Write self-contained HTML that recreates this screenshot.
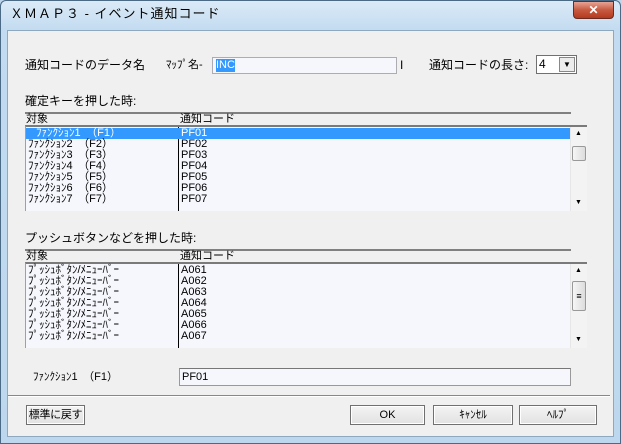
<!DOCTYPE html>
<html><head><meta charset="utf-8"><style>
*{margin:0;padding:0;box-sizing:border-box}
body{width:621px;height:444px;overflow:hidden;background:#bcd6ec;font-family:"Liberation Sans","Noto Sans CJK JP",sans-serif;font-size:12px;color:#000;position:relative}
.a{position:absolute}
.win{left:0;top:0;width:621px;height:444px;border:1px solid #4b6a86;border-radius:6px 6px 0 0;background:linear-gradient(#dbeaf7,#c2dbf0 30px,#bdd7ee)}
.client{left:7px;top:30px;width:607px;height:407px;background:#f0f0f0;border:1px solid #8ea8c0}
.t{white-space:nowrap;line-height:13px}
.hdr{background:#f0f0f0;border-top:2px solid #808080;height:13px;line-height:11px}
.list{background:#f6f7fd;border-top:2px solid #7a7a7a;border-left:1px solid #a0a0a0}
.row{position:absolute;left:0;height:11px;line-height:11px;font-size:11px;width:545px;white-space:nowrap}
.sb{background:#f3f3f3;border-left:1px solid #e6e6e6}
.btn{border:1px solid #707070;background:linear-gradient(#f4f4f4,#e2e2e2);text-align:center;font-size:11px;line-height:18px;box-shadow:inset 0 0 0 1px #fff;white-space:nowrap;overflow:hidden}
</style></head><body>
<div class="a win"></div>
<div class="a t" style="left:10px;top:7px;font-size:13px;letter-spacing:1px">ＸＭＡＰ３ - イベント通知コード</div>
<div class="a" style="left:573px;top:1px;width:41px;height:18px;border:1px solid #6b2b22;border-radius:0 0 4px 4px;background:linear-gradient(#e7a493,#c75a41 50%,#b53a1f);color:#fff;text-align:center;font-weight:bold;font-size:12px;line-height:16px">✕</div>
<div class="a client"></div>

<div class="a t" style="left:25px;top:59px">通知コードのデータ名</div>
<div class="a t" style="left:166px;top:59px;font-size:11px">ﾏｯﾌﾟ名-</div>
<div class="a" style="left:212px;top:57px;width:185px;height:17px;background:#f6f7fd;border:1px solid #abadb3"></div>
<div class="a t" style="left:216px;top:59px;background:#3399ff;color:#fff;font-size:11px">INC</div>
<div class="a t" style="left:400px;top:59px">I</div>
<div class="a t" style="left:429px;top:59px">通知コードの長さ:</div>
<div class="a" style="left:536px;top:55px;width:41px;height:19px;border:1px solid #707070;background:#fff"></div>
<div class="a t" style="left:539px;top:58px">4</div>
<div class="a" style="left:559px;top:57px;width:16px;height:15px;background:#ececec;border:1px solid #888;font-size:8px;text-align:center;line-height:14px">▼</div>

<div class="a t" style="left:25px;top:95px">確定キーを押した時:</div>
<div class="a hdr" style="left:25px;top:112px;width:546px"></div>
<div class="a t" style="left:26px;top:113px;font-size:11px">対象</div>
<div class="a t" style="left:180px;top:113px;font-size:11px">通知コード</div>
<div class="a list" style="left:25px;top:125px;width:562px;height:86px">
<div class="a" style="left:152px;top:0;width:1px;height:84px;background:#000"></div>
<div class="row" style="top:1px;background:#3399ff;color:#fff"><span class="a" style="left:10px">ﾌｧﾝｸｼｮﾝ1　（F1）</span><span class="a" style="left:155px">PF01</span></div>
<div class="row" style="top:12px"><span class="a" style="left:2px">ﾌｧﾝｸｼｮﾝ2　（F2）</span><span class="a" style="left:155px">PF02</span></div>
<div class="row" style="top:23px"><span class="a" style="left:2px">ﾌｧﾝｸｼｮﾝ3　（F3）</span><span class="a" style="left:155px">PF03</span></div>
<div class="row" style="top:34px"><span class="a" style="left:2px">ﾌｧﾝｸｼｮﾝ4　（F4）</span><span class="a" style="left:155px">PF04</span></div>
<div class="row" style="top:45px"><span class="a" style="left:2px">ﾌｧﾝｸｼｮﾝ5　（F5）</span><span class="a" style="left:155px">PF05</span></div>
<div class="row" style="top:56px"><span class="a" style="left:2px">ﾌｧﾝｸｼｮﾝ6　（F6）</span><span class="a" style="left:155px">PF06</span></div>
<div class="row" style="top:67px"><span class="a" style="left:2px">ﾌｧﾝｸｼｮﾝ7　（F7）</span><span class="a" style="left:155px">PF07</span></div>
<div class="a sb" style="left:544px;top:0;width:17px;height:84px">
<div class="a" style="left:4px;top:3px;font-size:7px">▲</div>
<div class="a" style="left:1px;top:19px;width:14px;height:15px;border:1px solid #999;border-radius:2px;background:linear-gradient(90deg,#f6f6f6,#dcdcdc)"></div>
<div class="a" style="left:4px;top:72px;font-size:7px">▼</div></div>
</div>

<div class="a t" style="left:25px;top:232px">プッシュボタンなどを押した時:</div>
<div class="a hdr" style="left:25px;top:249px;width:546px"></div>
<div class="a t" style="left:26px;top:250px;font-size:11px">対象</div>
<div class="a t" style="left:180px;top:250px;font-size:11px">通知コード</div>
<div class="a list" style="left:25px;top:262px;width:562px;height:86px">
<div class="a" style="left:152px;top:0;width:1px;height:84px;background:#000"></div>
<div class="row" style="top:1px"><span class="a" style="left:2px">ﾌﾟｯｼｭﾎﾞﾀﾝ/ﾒﾆｭｰﾊﾞｰ</span><span class="a" style="left:155px">A061</span></div>
<div class="row" style="top:12px"><span class="a" style="left:2px">ﾌﾟｯｼｭﾎﾞﾀﾝ/ﾒﾆｭｰﾊﾞｰ</span><span class="a" style="left:155px">A062</span></div>
<div class="row" style="top:23px"><span class="a" style="left:2px">ﾌﾟｯｼｭﾎﾞﾀﾝ/ﾒﾆｭｰﾊﾞｰ</span><span class="a" style="left:155px">A063</span></div>
<div class="row" style="top:34px"><span class="a" style="left:2px">ﾌﾟｯｼｭﾎﾞﾀﾝ/ﾒﾆｭｰﾊﾞｰ</span><span class="a" style="left:155px">A064</span></div>
<div class="row" style="top:45px"><span class="a" style="left:2px">ﾌﾟｯｼｭﾎﾞﾀﾝ/ﾒﾆｭｰﾊﾞｰ</span><span class="a" style="left:155px">A065</span></div>
<div class="row" style="top:56px"><span class="a" style="left:2px">ﾌﾟｯｼｭﾎﾞﾀﾝ/ﾒﾆｭｰﾊﾞｰ</span><span class="a" style="left:155px">A066</span></div>
<div class="row" style="top:67px"><span class="a" style="left:2px">ﾌﾟｯｼｭﾎﾞﾀﾝ/ﾒﾆｭｰﾊﾞｰ</span><span class="a" style="left:155px">A067</span></div>
<div class="a sb" style="left:544px;top:0;width:17px;height:84px">
<div class="a" style="left:4px;top:3px;font-size:7px">▲</div>
<div class="a" style="left:1px;top:17px;width:14px;height:30px;border:1px solid #999;border-radius:2px;background:linear-gradient(90deg,#f6f6f6,#dcdcdc);font-size:9px;text-align:center;line-height:28px">≡</div>
<div class="a" style="left:4px;top:72px;font-size:7px">▼</div></div>
</div>

<div class="a t" style="left:33px;top:371px;font-size:11px">ﾌｧﾝｸｼｮﾝ1　（F1）</div>
<div class="a" style="left:179px;top:368px;width:392px;height:18px;background:#f6f7fd;border:1px solid #999;border-top-color:#777"></div>
<div class="a t" style="left:182px;top:371px;font-size:11px">PF01</div>
<div class="a" style="left:8px;top:395px;width:602px;height:2px;background:#888;border-bottom:1px solid #fff"></div>

<div class="a btn" style="left:26px;top:405px;width:59px;height:20px;font-size:11px;letter-spacing:-0.3px">標準に戻す</div>
<div class="a btn" style="left:350px;top:405px;width:75px;height:20px">OK</div>
<div class="a btn" style="left:433px;top:405px;width:80px;height:20px">ｷｬﾝｾﾙ</div>
<div class="a btn" style="left:519px;top:405px;width:78px;height:20px">ﾍﾙﾌﾟ</div>
</body></html>
